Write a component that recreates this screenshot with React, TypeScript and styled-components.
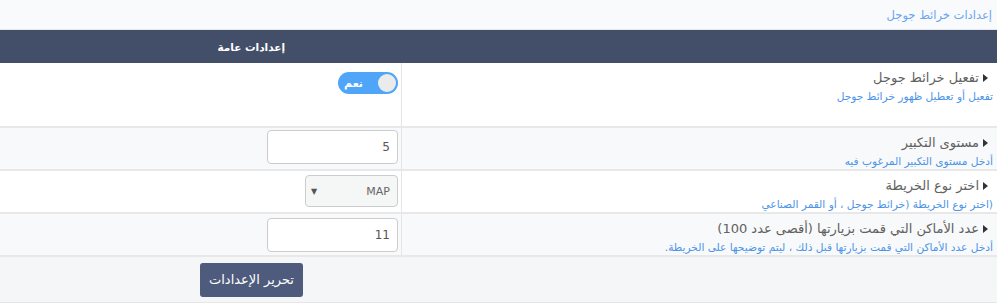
import React from 'react';
import styled, { createGlobalStyle } from 'styled-components';

const GlobalStyle = createGlobalStyle`
  html, body {
    margin: 0;
    padding: 0;
    background: #ffffff;
    font-family: "DejaVu Sans", "Noto Sans", sans-serif;
  }
`;

const Page = styled.div`
  direction: rtl;
  width: 997px;
`;

const TopBar = styled.div`
  height: 29px;
  background: #f9fafc;
  border-bottom: 1px solid #e6e8ec;
  display: flex;
  align-items: center;
  padding-right: 5px;
  font-size: 11.5px;
  color: #6aa5f0;
`;

const Header = styled.div`
  display: grid;
  grid-template-columns: 1fr 401px;
  height: 33px;
  background: #434f69;
  color: #ffffff;
  font-size: 10.5px;
  font-weight: bold;
  align-items: center;
`;

const HeaderText = styled.div`
  padding-right: 116px;
`;

const Row = styled.div<{ $alt?: boolean; $height: number }>`
  display: grid;
  grid-template-columns: 1fr 401px;
  min-height: ${(p) => p.$height}px;
  background: ${(p) => (p.$alt ? '#f8f9fa' : '#ffffff')};
  border-bottom: 2px solid #e8e8e8;
`;

const LabelCell = styled.div`
  padding: 6px 4px 0 0;
  border-left: 1px solid #e5e5e5;
`;

const Title = styled.div`
  display: flex;
  align-items: center;
  padding-right: 5px;
  font-size: 13px;
  color: #616161;
  line-height: 18px;
`;

const Marker = styled.span`
  width: 0;
  height: 0;
  margin-left: 4px;
  border-top: 4px solid transparent;
  border-bottom: 4px solid transparent;
  border-left: 5px solid #333;
`;

const Desc = styled.div`
  font-size: 10.6px;
  color: #4b94e8;
  line-height: 16px;
  margin-top: 1px;
`;

const ControlCell = styled.div<{ $top: number }>`
  padding: ${(p) => p.$top}px 3px 0 0;
`;

const Toggle = styled.div`
  width: 60px;
  height: 22px;
  border-radius: 11px;
  background: #4fa6f8;
  display: flex;
  align-items: center;
  justify-content: space-between;
  padding: 0 2px 0 6px;
  box-sizing: border-box;
`;

const Knob = styled.div`
  width: 18px;
  height: 18px;
  border-radius: 50%;
  background: #ebebeb;
`;

const ToggleText = styled.span`
  color: #ffffff;
  font-size: 11px;
  font-weight: bold;
`;

const TextInput = styled.div`
  width: 131px;
  height: 34px;
  box-sizing: border-box;
  border: 1px solid #cccccc;
  border-radius: 4px;
  background: #ffffff;
  display: flex;
  align-items: center;
  padding-right: 7px;
  font-size: 12px;
  color: #555;
`;

const Select = styled.div`
  width: 93px;
  height: 32px;
  box-sizing: border-box;
  border: 1px solid #cccccc;
  border-radius: 4px;
  background: #f5f6f6;
  display: flex;
  align-items: center;
  justify-content: space-between;
  padding: 0 7px 0 5px;
  font-size: 11px;
  color: #666;
`;

const Caret = styled.span`
  font-size: 8px;
  color: #555;
`;

const Footer = styled.div`
  height: 45px;
  background: #f5f6f8;
  border-bottom: 2px solid #e6e6e6;
  display: flex;
  align-items: center;
  padding-right: 694px;
`;

const Button = styled.button`
  width: 103px;
  height: 34px;
  background: #4e5b7c;
  color: #ffffff;
  border: none;
  border-radius: 3px;
  font-family: inherit;
  font-size: 13px;
`;

const rows = [
  { title: 'تفعيل خرائط جوجل', desc: 'تفعيل أو تعطيل ظهور خرائط جوجل', height: 63, alt: false },
  { title: 'مستوى التكبير', desc: 'أدخل مستوى التكبير المرغوب فيه', height: 40, alt: true },
  { title: 'اختر نوع الخريطة', desc: '(اختر نوع الخريطة (خرائط جوجل ، أو القمر الصناعي', height: 40, alt: false },
  { title: 'عدد الأماكن التي قمت بزيارتها (أقصى عدد 100)', desc: 'أدخل عدد الأماكن التي قمت بزيارتها قبل ذلك ، ليتم توضيحها على الخريطة.', height: 40, alt: true },
];

export default function App() {
  const controls = [
    <ControlCell $top={9} key="t">
      <Toggle>
        <Knob />
        <ToggleText>نعم</ToggleText>
      </Toggle>
    </ControlCell>,
    <ControlCell $top={2} key="z">
      <TextInput>5</TextInput>
    </ControlCell>,
    <ControlCell $top={4} key="s">
      <Select>
        <span>MAP</span>
        <Caret>▼</Caret>
      </Select>
    </ControlCell>,
    <ControlCell $top={4} key="n">
      <TextInput>11</TextInput>
    </ControlCell>,
  ];

  return (
    <Page>
      <GlobalStyle />
      <TopBar>إعدادات خرائط جوجل</TopBar>
      <Header>
        <div />
        <HeaderText>إعدادات عامة</HeaderText>
      </Header>
      {rows.map((r, i) => (
        <Row key={i} $alt={r.alt} $height={r.height}>
          <LabelCell>
            <Title>
              <Marker />
              {r.title}
            </Title>
            <Desc>{r.desc}</Desc>
          </LabelCell>
          {controls[i]}
        </Row>
      ))}
      <Footer>
        <Button>تحرير الإعدادات</Button>
      </Footer>
    </Page>
  );
}
